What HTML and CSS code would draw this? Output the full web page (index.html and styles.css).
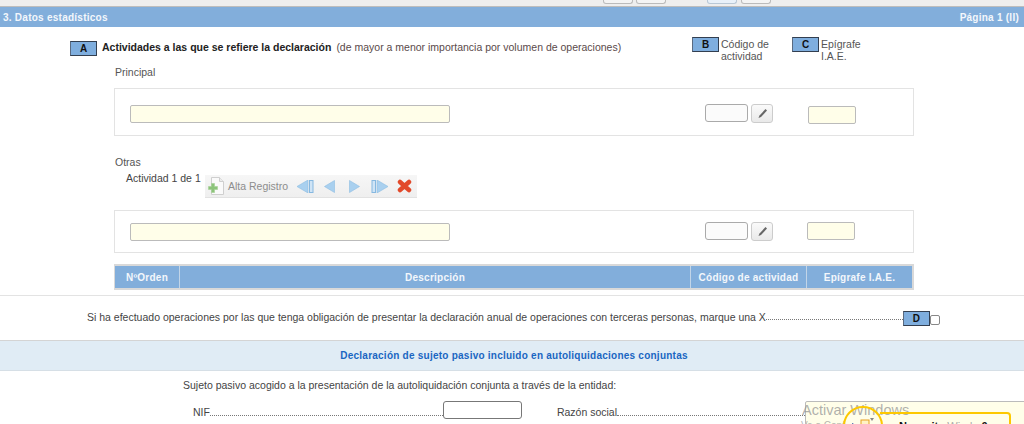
FILE: index.html
```html
<!DOCTYPE html>
<html lang="es">
<head>
<meta charset="utf-8">
<title>Datos estadísticos</title>
<link rel="stylesheet" href="styles.css">
</head>
<body>
<div class="page">
  <div class="topbar">
    <span class="tb tb-1"></span><span class="tb tb-2"></span><span class="tb tb-3 tb-active"></span><span class="tb tb-2"></span>
  </div>
  <header class="band"><span>3. Datos estadísticos</span><span>Página 1 (II)</span></header>

  <div class="intro">
    <span class="key key-a">A</span>
    <p class="intro-text"><b>Actividades a las que se refiere la declaración</b><span class="intro-note">(de mayor a menor importancia por volumen de operaciones)</span></p>
    <span class="key key-b">B</span>
    <span class="key-label label-b">Código de actividad</span>
    <span class="key key-c">C</span>
    <span class="key-label label-c">Epígrafe I.A.E.</span>
  </div>

  <div class="sub sub-principal">Principal</div>
  <div class="box box-1">
    <span class="field field-desc"></span>
    <span class="field field-code"></span>
    <span class="pencil"><svg width="11" height="11" viewBox="0 0 11 11"><path d="M8.500 1l1.500 1.500-6 6.500-2.500 1 1-2.500z" fill="#666"/></svg></span>
    <span class="field field-epi"></span>
  </div>

  <div class="sub sub-otras">Otras</div>
  <div class="records">
    <span class="count">Actividad 1 de 1</span>
    <div class="toolbar">
      <svg class="ico-add" width="17" height="18" viewBox="0 0 17 18"><path d="M3.500 .5h8l4 4v13h-12z" fill="#fafafa" stroke="#cfcfcf"/><path d="M11.500 .5v4h4" fill="#ececec" stroke="#cfcfcf"/><path d="M3.500 6.500h3v3h3v3h-3v3h-3v-3h-3v-3h3z" fill="#8cc47a" stroke="#a5d096" stroke-width=".6"/></svg>
      <span class="alta">Alta Registro</span>
      <svg class="nav nav-first" width="17" height="13" viewBox="0 0 17 13"><path d="M11 0v13L0 6.500z" fill="#a9d0ef" stroke="#8dbde3" stroke-width=".6"/><rect x="12.500" y=".5" width="3.500" height="12" fill="#cfe4f6" stroke="#86b8e0"/></svg>
      <svg class="nav nav-prev" width="11" height="13" viewBox="0 0 11 13"><path d="M10.500 .5v12L.5 6.500z" fill="#a9d0ef" stroke="#8dbde3" stroke-width=".6"/></svg>
      <svg class="nav nav-next" width="11" height="13" viewBox="0 0 11 13"><path d="M.5 .5v12l10-6z" fill="#a9d0ef" stroke="#8dbde3" stroke-width=".6"/></svg>
      <svg class="nav nav-last" width="17" height="13" viewBox="0 0 17 13"><rect x="1" y=".5" width="3.500" height="12" fill="#cfe4f6" stroke="#86b8e0"/><path d="M6 0v13l11-6.500z" fill="#a9d0ef" stroke="#8dbde3" stroke-width=".6"/></svg>
      <svg class="nav nav-del" width="15" height="14" viewBox="0 0 15 14"><path d="M3 3L12 11M12 3L3 11" stroke="#e2492a" stroke-width="4.500" stroke-linecap="round"/></svg>
    </div>
  </div>
  <div class="box box-2">
    <span class="field field-desc"></span>
    <span class="field field-code"></span>
    <span class="pencil"><svg width="11" height="11" viewBox="0 0 11 11"><path d="M8.500 1l1.500 1.500-6 6.500-2.500 1 1-2.500z" fill="#666"/></svg></span>
    <span class="field field-epi field-epi-2"></span>
  </div>

  <div class="grid-head">
    <span class="col col-order">NºOrden</span>
    <span class="col col-desc">Descripción</span>
    <span class="col col-code">Código de actividad</span>
    <span class="col col-epi">Epígrafe I.A.E.</span>
  </div>

  <div class="third">
    <span class="third-text">Si ha efectuado operaciones por las que tenga obligación de presentar la declaración anual de operaciones con terceras personas, marque una X</span>
    <span class="dots"></span>
    <span class="key key-d">D</span>
    <span class="check"></span>
  </div>

  <div class="subband">Declaración de sujeto pasivo incluido en autoliquidaciones conjuntas</div>
  <p class="sujeto">Sujeto pasivo acogido a la presentación de la autoliquidación conjunta a través de la entidad:</p>
  <div class="nif-row">
    <span class="nif-label">NIF</span><span class="dots dots-nif"></span><span class="field field-nif"></span>
    <span class="razon-label">Razón social</span><span class="dots dots-razon"></span><span class="field field-razon"></span>
  </div>
</div>

<div class="overlays">
  <div class="activate">Activar Windows</div>
  <div class="activate-sub">Ve a Conf</div>
  <div class="ring"></div>
  <div class="ring-icon">
    <svg width="22" height="12" viewBox="0 0 22 12"><path d="M0 5l5 2.500L0 10z" fill="#2a55a8"/><rect x="9" y="2" width="8" height="10" fill="#fff3c4" stroke="#e8a020"/><path d="M18 0h4l-2 3z" fill="#888"/></svg>
  </div>
  <div class="tip"><b>Necesita</b> <span>Windo</span> <b>0</b></div>
</div>
</body>
</html>
```
FILE: styles.css
```css
* { box-sizing: border-box; }
html, body { margin: 0; padding: 0; height: 424px; overflow: hidden; background: #fff; }
body { font-family: "Liberation Sans", Arial, sans-serif; font-size: 11px; color: #444; position: relative; }
.page { width: 1024px; height: 424px; overflow: hidden; }

.topbar { height: 7px; background: #eee; border-bottom: 1px solid #bdbdbd; display: flex; padding-left: 603px; overflow: hidden; }
.tb { display: block; width: 30px; height: 4px; background: #f4f4f4; border: 1px solid #bbb; border-top: 0; border-radius: 0 0 3px 3px; margin-right: 3px; }
.tb-3 { margin-left: 38px; margin-right: 4px; }
.tb-active { background: #e9f1f9; border-color: #b9c8d6; }

.band { height: 20px; background: #82aedb; color: #f3f7fb; font-weight: 700; font-size: 10px; letter-spacing: .25px; display: flex; justify-content: space-between; align-items: center; padding: 0 5px 0 3px; }

.intro { height: 34px; padding-top: 14px; display: flex; align-items: flex-start; padding-left: 70px; }
.key { display: inline-flex; align-items: center; justify-content: center; width: 27px; height: 15px; background: #7faede; border: 1px solid #333f50; border-left-color: #5a6a80; font-weight: 700; font-size: 10px; color: #111; flex: none; }
.intro-text { margin: 0; padding-left: 5px; width: 595px; line-height: 12px; font-size: 10.5px; white-space: nowrap; color: #5a4a4a; }
.intro-text b { color: #222; }
.intro-note { margin-left: 5px; }
.key-b, .key-c { margin-top: -4px; }
.key-label { line-height: 12px; margin-top: -3px; padding-left: 2px; font-size: 10.5px; color: #555; }
.label-b { width: 73px; }
.label-c { width: 50px; }

.sub { font-size: 10.5px; color: #555; line-height: 12px; }
.sub-principal { padding-left: 115px; height: 27px; padding-top: 5px; }

.box { margin-left: 114px; width: 800px; border: 1px solid #e3e3e3; display: flex; align-items: flex-start; background: #fff; }
.box-1 { height: 48px; padding-top: 15px; }
.box-2 { height: 43px; padding-top: 11px; }

.field { display: block; height: 18px; background: #fffee9; border: 1px solid #bbb; border-radius: 2px; flex: none; }
.field-desc { width: 320px; margin: 1px 0 0 15px; }
.field-code { width: 43px; margin-left: 255px; background: #fbfbfb; border-radius: 3px; border-color: #aaa; }
.pencil { width: 22px; height: 19px; border: 1px solid #ccc; border-radius: 3px; background: linear-gradient(#fafafa, #e9e9e9); display: flex; align-items: center; justify-content: center; margin-left: 3px; flex: none; }
.field-epi { width: 48px; margin: 2px 0 0 35px; }
.field-epi-2 { margin: 0 0 0 34px; }

.sub-otras { padding-left: 115px; margin-top: 20px; height: 16px; }
.records { display: flex; height: 38px; padding-left: 126px; align-items: flex-start; }
.count { font-size: 10.5px; color: #444; line-height: 12px; width: 79px; flex: none; white-space: nowrap; }
.toolbar { width: 212px; height: 23px; margin-top: 3px; background: linear-gradient(#f6f6f6, #efefef); border-bottom: 1px solid #e2e2e2; display: flex; align-items: center; padding-left: 3px; }
.ico-add { flex: none; }
.alta { color: #8d8d8d; font-size: 10.5px; margin-left: 3px; width: 61px; white-space: nowrap; }
.nav { flex: none; }
.nav-first { margin-left: 8px; }
.nav-prev { margin-left: 10px; }
.nav-next { margin-left: 14px; }
.nav-last { margin-left: 11px; }
.nav-del { margin-left: 9px; }

.grid-head { margin: 11px 0 0 114px; width: 800px; height: 26px; border: 2px solid #d9d9d9; border-left-width: 1px; background: #82aedb; display: flex; color: #f3f7fb; font-weight: 700; font-size: 10px; letter-spacing: .25px; }
.col { display: flex; align-items: center; justify-content: center; border-right: 1px solid #c2d5e8; height: 100%; white-space: nowrap; }
.col-order { width: 65px; }
.col-desc { width: 511px; }
.col-code { width: 116px; }
.col-epi { width: 105px; border-right: 0; }

.third { margin-top: 5px; border-top: 1px solid #e3e3e3; height: 45px; display: flex; padding: 15px 0 0 87px; align-items: flex-start; }
.third-text { font-size: 10.5px; color: #444; line-height: 13px; white-space: nowrap; flex: none; }
.dots { display: block; border-bottom: 1px dotted #777; height: 9px; flex: none; }
.third .dots { width: 137px; }
.key-d { width: 27px; height: 15px; }
.check { width: 10px; height: 10px; border: 1px solid #888; border-radius: 2px; margin: 4px 0 0 0; flex: none; background: #fff; }

.subband { height: 31px; background: #e0ecf5; border-top: 1px solid #d4d4d4; border-bottom: 1px solid #d6dfe6; color: #1a66c2; font-weight: 700; font-size: 10px; letter-spacing: .24px; display: flex; align-items: center; justify-content: center; padding-left: 4px; }
.sujeto { margin: 0; padding: 8px 0 0 183px; line-height: 13px; height: 30px; font-size: 10.5px; color: #444; }
.nif-row { display: flex; align-items: flex-start; padding-left: 193px; height: 24px; overflow: hidden; }
.nif-label, .razon-label { font-size: 10.5px; line-height: 13px; padding-top: 5px; flex: none; white-space: nowrap; }
.dots-nif { width: 233px; height: 15px; }
.field-nif { width: 79px; height: 18px; background: #fff; border-color: #777; border-radius: 3px; }
.razon-label { margin-left: 35px; }
.dots-razon { width: 188px; height: 15px; }
.field-razon { width: 230px; height: 24px; }

.overlays { position: absolute; left: 0; top: 0; width: 1024px; height: 424px; overflow: hidden; pointer-events: none; }
.activate { position: absolute; left: 802px; top: 402px; font-size: 14.5px; color: rgba(150,150,150,.75); line-height: 16px; }
.activate-sub { position: absolute; left: 801px; top: 420px; font-size: 10px; color: rgba(150,150,150,.7); line-height: 12px; }
.ring { position: absolute; left: 843px; top: 406px; width: 40px; height: 40px; border: 2px solid #fdc800; border-radius: 50%; }
.ring-icon { position: absolute; left: 852px; top: 418px; line-height: 0; }
.tip { position: absolute; left: 880px; top: 412px; width: 131px; height: 30px; border: 2px solid #fdc800; border-left: 0; border-radius: 0 4px 4px 0; padding: 6px 0 0 19px; font-size: 11px; line-height: 13px; color: #111; white-space: nowrap; overflow: hidden; }
.tip span { color: #aaa; }
```
